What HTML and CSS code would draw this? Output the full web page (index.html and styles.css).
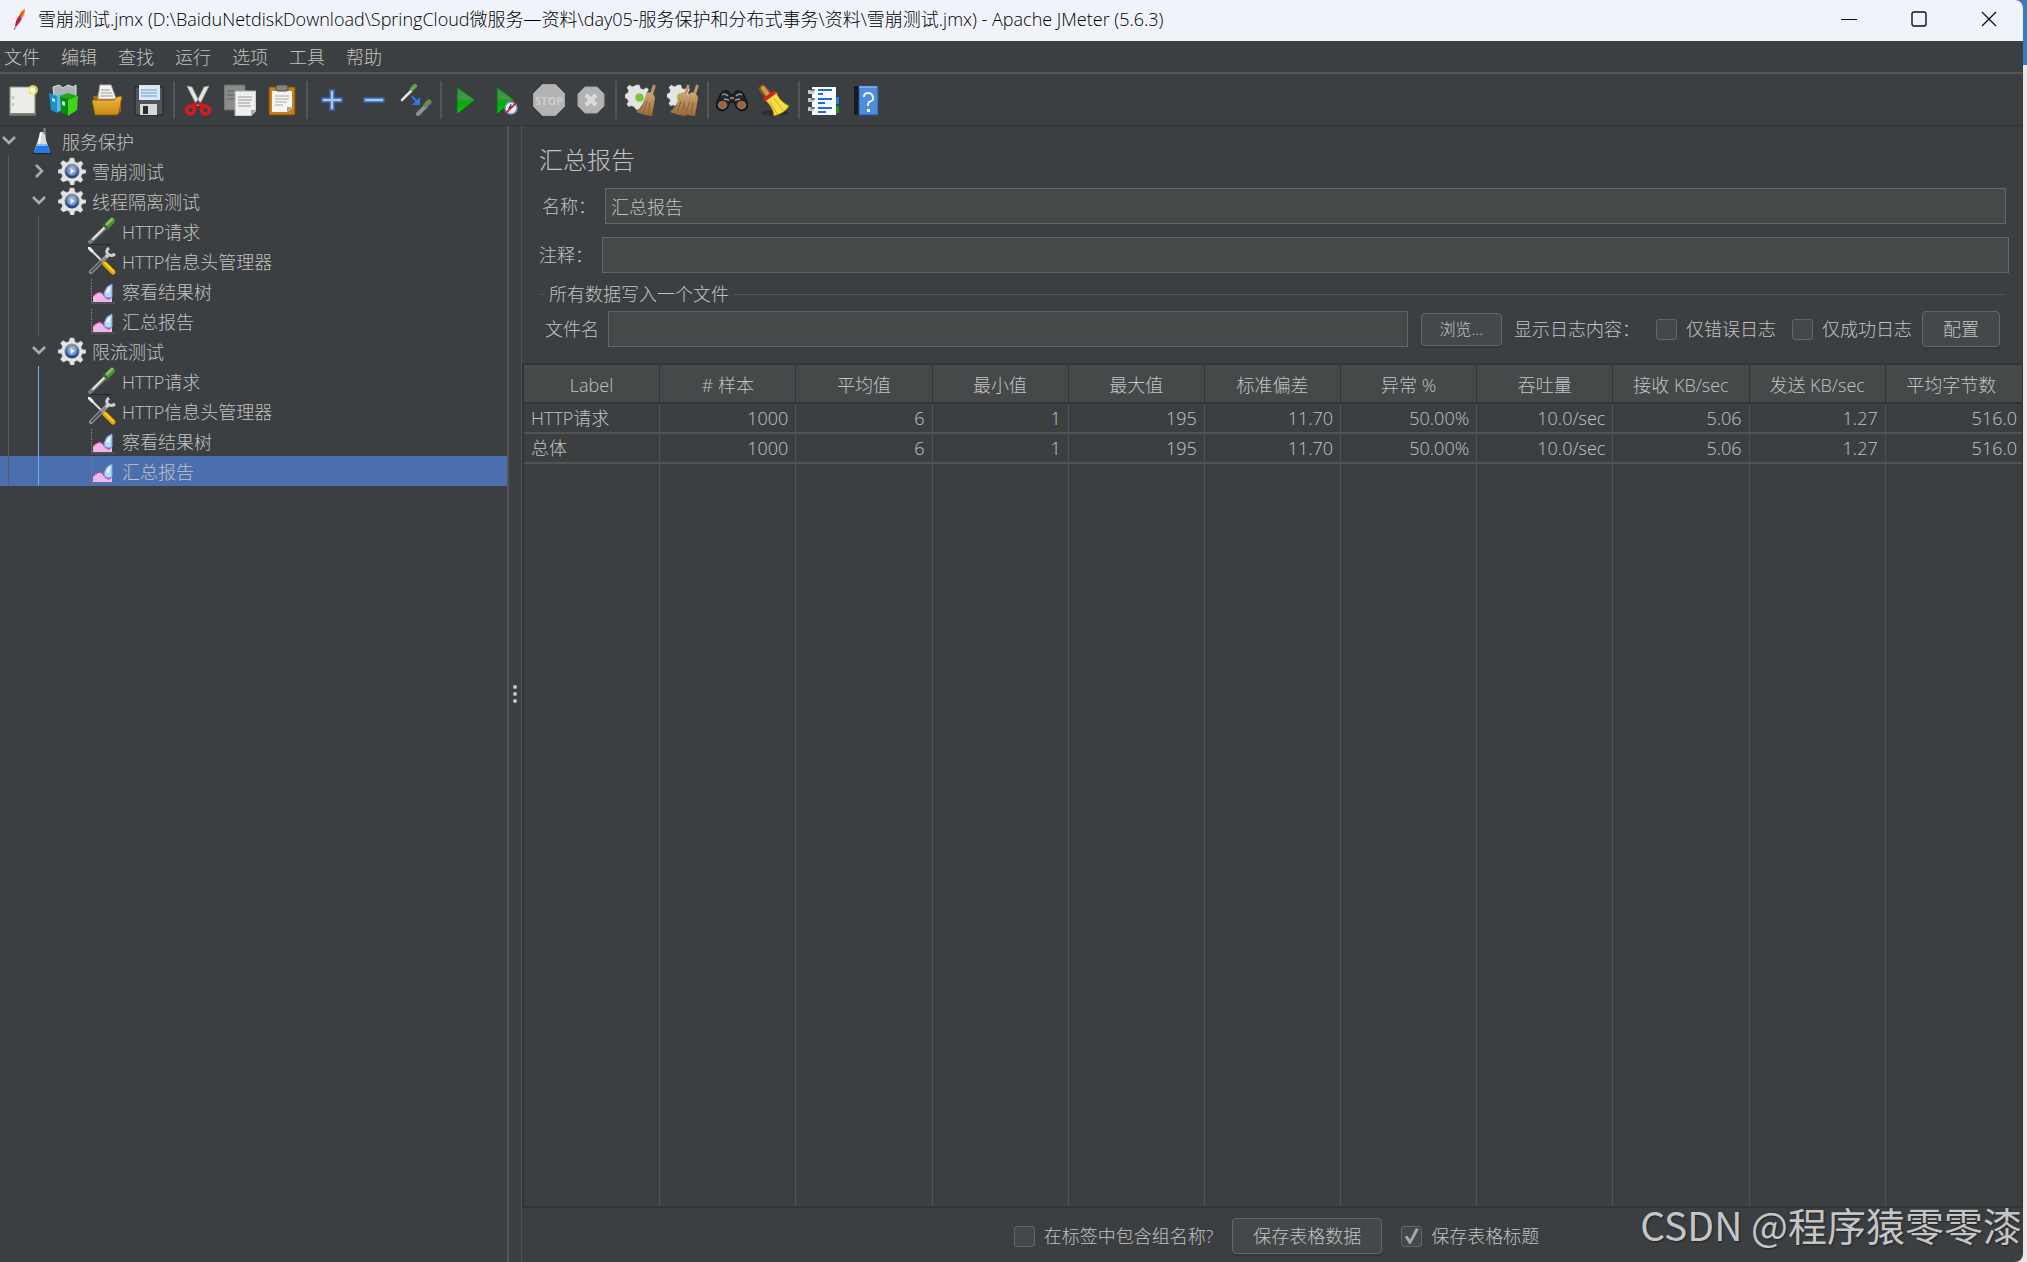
FILE: index.html
```html
<!DOCTYPE html>
<html lang="zh-CN">
<head>
<meta charset="utf-8">
<title>雪崩测试.jmx - Apache JMeter (5.6.3)</title>
<link rel="stylesheet" href="styles.css">
</head>
<body>
<svg class="defs" aria-hidden="true">
  <defs>
    <linearGradient id="g-blue" x1="0" y1="0" x2="0" y2="1"><stop offset="0" stop-color="#b4c6de"/><stop offset=".5" stop-color="#7b9bc9"/><stop offset="1" stop-color="#6fa0e6"/></linearGradient>
    <linearGradient id="g-ring" x1="0" y1="0" x2="0" y2="1"><stop offset="0" stop-color="#8293b0"/><stop offset="1" stop-color="#27457f"/></linearGradient>
    <linearGradient id="g-green" x1="0" y1="0" x2="0" y2="1"><stop offset="0" stop-color="#2f8f35"/><stop offset=".4" stop-color="#3f9a45"/><stop offset=".6" stop-color="#08a80a"/><stop offset="1" stop-color="#04d004"/></linearGradient>
    <linearGradient id="g-gold" x1="0" y1="0" x2="0" y2="1"><stop offset="0" stop-color="#f0b840"/><stop offset="1" stop-color="#c98912"/></linearGradient>
    <linearGradient id="g-broom" x1="0" y1="0" x2="0" y2="1"><stop offset="0" stop-color="#cfa873"/><stop offset="1" stop-color="#97693a"/></linearGradient>
    <symbol id="cog" viewBox="0 0 28 28">
      <path fill="#e4e4e2" stroke="#b4b4b0" stroke-width=".6" d="M12 1h4l1 4 2.500 1L23 4l2 2.500-2 3.500 1 2.500 4 .5v3l-4 1-1 2.500 2 3.500-2.500 2.500-3.500-2-2.500 1-.5 4h-3.500l-1-4-2.500-1L5 25l-2.500-2.500 2-3.500-1-2.500L0 16v-3l3.500-1 1-2.500-2-3.500L5 3.500l3.500 2 2.500-1z"/>
      <circle cx="14" cy="14" r="6" fill="url(#g-blue)" stroke="url(#g-ring)" stroke-width="3"/>
      <path fill="#e6effa" d="M12.500 11l4.500 3-4.500 3z"/>
    </symbol>
    <symbol id="flask" viewBox="0 0 28 28">
      <ellipse cx="14" cy="26" rx="10" ry="1.500" fill="#222426"/>
      <path fill="#d4dadd" d="M12 5h5l1 8 4 12q0 1-1 1H7q-1 0-1-1l4-12z"/>
      <path fill="#1f7be8" d="M9 17h10l3 8q0 1-1 1H7q-1 0-1-1z"/><path fill="#81b7fa" d="M9 17h10l.5 2h-11z"/>
      <path stroke="#818789" stroke-width="2" d="M16.500 1v6"/><path stroke="#fff" stroke-width="1.500" d="M13 6l-2 11"/>
    </symbol>
    <symbol id="dropper" viewBox="0 0 28 28">
      <path stroke="#26292b" stroke-width="1" d="M3 27.500h20"/>
      <path stroke="#777b7b" stroke-width="4" stroke-linecap="round" d="M2 25L17 11"/><path stroke="#e3e7e5" stroke-width="2" stroke-linecap="round" d="M5 22L17 10"/>
      <path stroke="#4d8b39" stroke-width="6" stroke-linecap="round" d="M19 9l5-5"/><path stroke="#83be61" stroke-width="3" stroke-linecap="round" d="M19 7l5-5"/><path stroke="#39692b" stroke-width="2" d="M15 7l6 6"/>
    </symbol>
    <symbol id="tools" viewBox="0 0 28 28">
      <path stroke="#e1e3e3" stroke-width="2" stroke-linecap="round" d="M2 2l14 14"/><path stroke="#f0f2f2" stroke-width="3" stroke-linecap="round" d="M1 1l3 3"/>
      <path stroke="#8c9190" stroke-width="4" stroke-linecap="round" d="M3 25L20 8"/><path stroke="#3b3e3e" stroke-width="1.500" d="M3 25l10-10"/>
      <path fill="none" stroke="#ccd0d0" stroke-width="3" d="M21 1q-4 3-1 6t7 0M18 10l3-3"/>
      <path stroke="#e3a900" stroke-width="5" stroke-linecap="round" d="M17 17l8 8"/><path stroke="#ffd92c" stroke-width="1.500" stroke-linecap="round" d="M17 16l8 8"/>
    </symbol>
    <symbol id="chart" viewBox="0 0 28 28">
      <path fill="none" stroke="#777b7e" d="M3.500 2v24H27" stroke-dasharray="2 1"/>
      <path fill="#efb5ee" d="M5 25v-6l4-3 3-1 3 2 3 4 3 1 3-2v5z"/><path fill="none" stroke="#bd3a71" stroke-width="1.300" stroke-dasharray="2 1" d="M5 19l4-3 3-1 3 2 3 4 3 1 3-2"/>
      <path fill="#b8d4fb" stroke="#6ea0e5" d="M16 16l3-6 5-3v13l-3 1-4-1z"/><path fill="#eef6ff" d="M18 15l2-4 3-2-2 7z"/>
    </symbol>
    <symbol id="chev-d" viewBox="0 0 18 18"><path fill="none" stroke="#adadad" stroke-width="2.500" d="M3 5l6 6 6-6"/></symbol>
    <symbol id="chev-r" viewBox="0 0 18 18"><path fill="none" stroke="#adadad" stroke-width="2.500" d="M6 3l6 6-6 6"/></symbol>
    <symbol id="gearbig" viewBox="0 0 32 32"><path fill="#e4e5e3" stroke="#b8bab8" stroke-width=".5" d="M12 1h4l1 4 3 1 4-2 2 2-2 4 1 3 3 1v4l-3 1-2 2 1 3-3 3-4-1-2 2h-3l-2-3-3-1-3 1-2-3 2-3-2-3-3-1v-3l4-2 1-3-2-3 3-3 3 2 3-1z"/><circle cx="16" cy="15" r="4.500" fill="#79c533" stroke="#adcc91"/></symbol>
    <symbol id="brush" viewBox="0 0 20 32"><path stroke="#b9966a" stroke-width="3" d="M18.500 1l-4 12"/><path fill="url(#g-broom)" d="M10 10l3-2 5 3 1 3-3 18-7-1-9-3q7-6 10-18z"/><path fill="none" stroke="#8a6238" d="M11 17l-4 12M14 18l-2 12M7 21l-4 6"/></symbol>
  </defs>
</svg>
<div class="window">
  <header class="titlebar">
    <svg class="feather" viewBox="0 0 20 28"><path stroke="#6b3276" stroke-width="1.500" stroke-dasharray="2 1" d="M3 27l5-10"/><path fill="#c91f46" d="M4 23q0-7 5-13l5-5-2 9q-3 7-8 9z"/><path fill="#f08322" d="M9 10q2-6 7-9 1 6-4 13z"/><path fill="none" stroke="#7f2a5b" d="M5 22q3-9 9-17"/></svg>
    <h1 class="caption">雪崩测试.jmx (D:\BaiduNetdiskDownload\SpringCloud微服务—资料\day05-服务保护和分布式事务\资料\雪崩测试.jmx) - Apache JMeter (5.6.3)</h1>
    <div class="winbtns">
      <button class="winbtn" aria-label="最小化"><svg viewBox="0 0 16 16"><path stroke="#111" stroke-width="1" d="M0 8.500h16"/></svg></button>
      <button class="winbtn" aria-label="最大化"><svg viewBox="0 0 16 16"><rect x="1" y="1" width="14" height="14" rx="2" fill="none" stroke="#111" stroke-width="1.400"/></svg></button>
      <button class="winbtn" aria-label="关闭"><svg viewBox="0 0 16 16"><path stroke="#111" stroke-width="1.300" d="M1 1l14 14M15 1L1 15"/></svg></button>
    </div>
  </header>
  <nav class="menubar">
    <button>文件</button><button>编辑</button><button>查找</button><button>运行</button><button>选项</button><button>工具</button><button>帮助</button>
  </nav>
  <div class="toolbar" role="toolbar">
    <button class="tool" aria-label="新建"><svg viewBox="0 0 32 32"><path fill="#ecece8" stroke="#8f8f86" stroke-width="1.200" d="M3 3h25v28H3z"/><path fill="#7d7e74" d="M3 29h26v2H3z"/><path stroke="#999" d="M6 12v3M6 19v3"/><circle cx="26" cy="6" r="5" fill="#f3e769" opacity=".8"/><circle cx="26" cy="6" r="2.500" fill="#fffde0"/></svg></button>
    <button class="tool" aria-label="模板"><svg viewBox="0 0 32 32"><path fill="#a8b4ba" stroke="#dbe3e6" d="M4 3l6-2 4 3 5-3 5 2 3-2v12H5z"/><path fill="#1d8fd0" d="M0 9l8 3 5-2v16l-5 3-6-3z"/><path fill="#59b9e8" d="M8 12l5-2v16l-5 2z"/><path fill="#1fa90e" d="M11 12l8-3 10 3-9 4z"/><path fill="#0c8a0a" d="M11 12l8 4v16l-7-4z"/><path fill="#3bd51a" d="M19 16l10-4-1 14-9 6z"/><path fill="#b8ecf5" d="M3 14l3 1v3l-3-1zM13 17l3 1v4l-3-1z"/></svg></button>
    <button class="tool" aria-label="打开"><svg viewBox="0 0 32 32"><path fill="#a36b0c" d="M2 12h4l1-3h16l2 4 5-1v16H5z"/><path fill="#f4f4f2" stroke="#b4b4b4" d="M9 1h11l5 14H7z"/><path stroke="#999" d="M10 6h9M10 9h11M9 12h13"/><path fill="url(#g-gold)" stroke="#8d5b08" stroke-width=".8" d="M1 16h22l3-3 5-1-3 17q-1 2-3 2H4z"/></svg></button>
    <button class="tool" aria-label="保存"><svg viewBox="0 0 32 32"><path fill="#515559" stroke="#1d1f21" d="M2 3h28v28H3l-1-2z"/><path fill="#d9e8f6" d="M6 1h21v15H6z"/><path stroke="#6f9cc9" d="M8 6h16M8 9h16M8 12h16"/><path fill="#d7d9d7" d="M7 20h17v11H7z"/><path fill="#292c2e" d="M10 22h5v8h-5z"/></svg></button>
    <span class="tsep"></span>
    <button class="tool" aria-label="剪切"><svg viewBox="0 0 32 32"><path fill="#e4e6e4" stroke="#9a9d9a" stroke-width=".7" d="M5 2l5 1 8 16-3 3zM27 2l-5 1-8 16 3 3z"/><g fill="none" stroke="#d81a1a" stroke-width="3.500"><circle cx="8.500" cy="26" r="4"/><circle cx="23.500" cy="26" r="4"/><path d="M11 22l4-3M21 22l-4-3"/></g></svg></button>
    <button class="tool" aria-label="复制"><svg viewBox="0 0 32 32"><path fill="#8b8d8d" stroke="#666" d="M0 1h21v25H0z"/><path stroke="#606363" d="M3 7h15M3 11h15M3 15h15"/><path fill="#efefed" stroke="#aaa" d="M11 7h21v20l-5 5H11z"/><path fill="#a9aaa5" d="M32 26h-5v6z"/><path stroke="#999" d="M14 13h14M14 16h14M14 19h12M14 22h13"/></svg></button>
    <button class="tool" aria-label="粘贴"><svg viewBox="0 0 32 32"><rect x="3" y="3" width="26" height="28" rx="1" fill="#c1821f" stroke="#7d4e0c"/><path fill="#f4f4f1" d="M6 7h20v17l-5 4H6z"/><path fill="#a0a29d" d="M26 23l-5 5v-5z"/><rect x="10" y="1" width="12" height="6" rx="2" fill="#82857c" stroke="#4d504a"/><path stroke="#aaa" d="M9 12h14M9 15h14M9 18h12M9 21h8"/></svg></button>
    <span class="tsep"></span>
    <button class="tool" aria-label="展开"><svg viewBox="0 0 32 32"><path fill="#a3c6ee" stroke="#3767ae" stroke-width="1.500" d="M14 6h4v8h8v4h-8v8h-4v-8H6v-4h8z"/></svg></button>
    <button class="tool" aria-label="折叠"><svg viewBox="0 0 32 32"><path fill="#a3c6ee" stroke="#3767ae" stroke-width="1.500" d="M6 14h20v4H6z"/></svg></button>
    <button class="tool" aria-label="切换"><svg viewBox="0 0 32 32"><path stroke="#e4e8e5" stroke-width="2.500" stroke-linecap="round" d="M2 16l9-9"/><path stroke="#63a64c" stroke-width="4" stroke-linecap="round" d="M12 5l3-3"/><path stroke="#8d918e" stroke-width="4" stroke-linecap="round" d="M18 30l8-8"/><path stroke="#6a8a60" stroke-width="5" stroke-linecap="round" d="M26 21l3-3"/><path stroke="#2d79e2" stroke-width="2" d="M12 12l5 6"/><path fill="#2d79e2" d="M20 13v8h-8z"/></svg></button>
    <span class="tsep"></span>
    <button class="tool" aria-label="启动"><svg viewBox="0 0 32 32"><path fill="url(#g-green)" stroke="#116315" stroke-width=".7" d="M8 3l18 13L8 30z"/></svg></button>
    <button class="tool" aria-label="不停顿启动"><svg viewBox="0 0 32 32"><path fill="url(#g-green)" stroke="#116315" stroke-width=".7" d="M6 3l17 13L6 30z"/><circle cx="20" cy="24" r="6" fill="#e4edf6" stroke="#6d99cc" stroke-width="1.500"/><path stroke="#4d79b0" d="M20 20v4l-3 1"/><path stroke="#d22" stroke-width="1.800" d="M15 29l10-10"/></svg></button>
    <button class="tool" aria-label="停止"><svg viewBox="0 0 32 32"><path fill="#b3b3b3" stroke="#a0a0a0" d="M10 0h12l10 10v12L22 32H10L0 22V10z"/><text x="16" y="21" text-anchor="middle" class="stop-text">STOP</text></svg></button>
    <button class="tool" aria-label="关闭线程"><svg viewBox="0 0 32 32"><path fill="#b3b3b3" stroke="#a5a5a5" d="M10 3h12l7 7v12l-7 7H10l-7-7V10z"/><path stroke="#dcdcdc" stroke-width="4" d="M11 11l10 10M21 11L11 21"/></svg></button>
    <span class="tsep"></span>
    <button class="tool" aria-label="清除"><svg viewBox="0 0 32 32"><use href="#gearbig" x="0" y="0" width="29" height="29"/><use href="#brush" x="11" y="0" width="20" height="32"/></svg></button>
    <button class="tool" aria-label="清除全部"><svg viewBox="0 0 32 32"><use href="#gearbig" x="0" y="0" width="28" height="28"/><use href="#brush" x="3" y="0" width="20" height="32"/><use href="#brush" x="12" y="0" width="20" height="32"/></svg></button>
    <span class="tsep wide"></span>
    <button class="tool" aria-label="搜索"><svg viewBox="0 0 32 32"><path fill="#242526" stroke="#0c0c0c" d="M4 11q2-5 8-4l3 4h2l3-4q6-1 8 4l4 9q0 6-6 7-6-1-7-7l-2-2h-2l-2 2q-1 6-7 7-6-1-6-7z"/><path stroke="#9a9ea2" stroke-width="1.500" d="M6 11q3-2 6 1M20 12q3-3 6-1M14 14h4M8 15l5 1M19 16l5-1"/><ellipse cx="6.500" cy="21" rx="4" ry="3.500" fill="#a65f2a" stroke="#8a8d90"/><ellipse cx="25.500" cy="21" rx="4" ry="3.500" fill="#a65f2a" stroke="#8a8d90"/></svg></button>
    <button class="tool" aria-label="重置搜索"><svg viewBox="0 0 32 32"><ellipse cx="17" cy="29" rx="14" ry="3" fill="#2d3032"/><path stroke="#8a571d" stroke-width="8" stroke-linecap="round" d="M5 5l5 6"/><path stroke="#d09a50" stroke-width="4" stroke-linecap="round" d="M5 4l5 7"/><path fill="#f3de45" stroke="#a88310" stroke-width=".8" d="M6 15l12-7q3 9 13 14-4 7-15 10-1-10-10-17z"/><path stroke="#cfae20" d="M12 17l7 13M16 14l9 12"/><path stroke="#d62222" stroke-width="4" d="M6 16l11-8"/></svg></button>
    <span class="tsep"></span>
    <button class="tool" aria-label="函数助手"><svg viewBox="0 0 32 32"><path fill="#247be0" d="M26 13h5v7h-5z"/><path fill="#1d8e28" d="M26 22h5v7h-5z"/><path fill="#fafafa" d="M4 3h24v28H4z"/><path stroke="#c8c8c8" stroke-width="4" d="M0 8h6M0 16h6M0 25h6"/><path stroke="#222" d="M3 6h4M3 15h4M3 24h4"/><path stroke="#1e69e4" stroke-width="2" d="M10 6h14M10 10h5M10 15h14M10 19h7M10 24h14M10 28h8"/></svg></button>
    <button class="tool" aria-label="帮助"><svg viewBox="0 0 32 32"><path fill="#151a20" d="M4 2h6v29H4z"/><path fill="#4e8ddb" stroke="#275694" d="M9 2h19v29H9z"/><path stroke="#a8c9f2" d="M9 3h18"/><path fill="none" stroke="#e8f2fe" stroke-width="2" d="M14 13q0-4 4-4t5 4-4 5q-1 1-1 4"/><path fill="#e8f2fe" d="M17 25h3v3h-3z"/></svg></button>
  </div>
  <div class="main">
    <aside class="tree" role="tree">
      <div class="row" role="treeitem"><svg class="chev"><use href="#chev-d"/></svg><svg class="ico"><use href="#flask"/></svg><span>服务保护</span></div>
      <div class="row" role="treeitem"><i class="guide"></i><svg class="chev"><use href="#chev-r"/></svg><svg class="ico"><use href="#cog"/></svg><span>雪崩测试</span></div>
      <div class="row" role="treeitem"><i class="guide"></i><svg class="chev"><use href="#chev-d"/></svg><svg class="ico"><use href="#cog"/></svg><span>线程隔离测试</span></div>
      <div class="row" role="treeitem"><i class="guide"></i><i class="guide"></i><i class="chev"></i><svg class="ico"><use href="#dropper"/></svg><span>HTTP请求</span></div>
      <div class="row" role="treeitem"><i class="guide"></i><i class="guide"></i><i class="chev"></i><svg class="ico"><use href="#tools"/></svg><span>HTTP信息头管理器</span></div>
      <div class="row" role="treeitem"><i class="guide"></i><i class="guide"></i><i class="chev"></i><svg class="ico"><use href="#chart"/></svg><span>察看结果树</span></div>
      <div class="row" role="treeitem"><i class="guide"></i><i class="guide"></i><i class="chev"></i><svg class="ico"><use href="#chart"/></svg><span>汇总报告</span></div>
      <div class="row" role="treeitem"><i class="guide"></i><svg class="chev"><use href="#chev-d"/></svg><svg class="ico"><use href="#cog"/></svg><span>限流测试</span></div>
      <div class="row" role="treeitem"><i class="guide"></i><i class="guide active"></i><i class="chev"></i><svg class="ico"><use href="#dropper"/></svg><span>HTTP请求</span></div>
      <div class="row" role="treeitem"><i class="guide"></i><i class="guide active"></i><i class="chev"></i><svg class="ico"><use href="#tools"/></svg><span>HTTP信息头管理器</span></div>
      <div class="row" role="treeitem"><i class="guide"></i><i class="guide active"></i><i class="chev"></i><svg class="ico"><use href="#chart"/></svg><span>察看结果树</span></div>
      <div class="row selected" role="treeitem" aria-selected="true"><i class="guide"></i><i class="guide active"></i><i class="chev"></i><svg class="ico"><use href="#chart"/></svg><span>汇总报告</span></div>
    </aside>
    <div class="splitter"><svg viewBox="0 0 6 20"><g fill="#c4c4c4"><circle cx="3" cy="3" r="2"/><circle cx="3" cy="10" r="2"/><circle cx="3" cy="17" r="2"/></g></svg></div>
    <main class="panel">
      <div class="form">
        <h2>汇总报告</h2>
        <div class="field name"><label for="name">名称：</label><input id="name" type="text" value="汇总报告"></div>
        <div class="field note"><label for="note">注释：</label><input id="note" type="text"></div>
        <section class="group">
          <div class="legend">所有数据写入一个文件</div>
          <div class="filerow">
            <label for="file">文件名</label><input id="file" type="text">
            <button class="btn browse">浏览...</button>
            <span class="loglabel">显示日志内容：</span>
            <label class="check"><input type="checkbox">仅错误日志</label>
            <label class="check"><input type="checkbox">仅成功日志</label>
            <button class="btn">配置</button>
          </div>
        </section>
      </div>
      <div class="tablewrap">
        <table>
          <thead><tr><th>Label</th><th># 样本</th><th>平均值</th><th>最小值</th><th>最大值</th><th>标准偏差</th><th>异常 %</th><th>吞吐量</th><th>接收 KB/sec</th><th>发送 KB/sec</th><th>平均字节数</th></tr></thead>
          <tbody>
            <tr><td>HTTP请求</td><td>1000</td><td>6</td><td>1</td><td>195</td><td>11.70</td><td>50.00%</td><td>10.0/sec</td><td>5.06</td><td>1.27</td><td>516.0</td></tr>
            <tr><td>总体</td><td>1000</td><td>6</td><td>1</td><td>195</td><td>11.70</td><td>50.00%</td><td>10.0/sec</td><td>5.06</td><td>1.27</td><td>516.0</td></tr>
            <tr class="rest" aria-hidden="true"><td></td><td></td><td></td><td></td><td></td><td></td><td></td><td></td><td></td><td></td><td></td></tr>
          </tbody>
        </table>
      </div>
      <footer class="actions">
        <label class="check"><input type="checkbox">在标签中包含组名称?</label>
        <button class="btn save">保存表格数据</button>
        <label class="check"><input type="checkbox" checked>保存表格标题</label>
      </footer>
    </main>
  </div>
  <div class="watermark">CSDN @程序猿零零漆</div>
</div>
</body>
</html>
```
FILE: styles.css
```css
:root {
  --bg: #3c3f41;
  --field: #45494a;
  --line: #515456;
  --dark: #323537;
  --border: #646667;
  --text: #c2c2c2;
}
* { box-sizing: border-box; }
body {
  margin: 0;
  background: linear-gradient(#3a7ab8 65px, #e8e8e8 65px);
  font-family: "Open Sans", "Noto Sans CJK SC", sans-serif;
  font-weight: 300;
  font-size: 18px;
  line-height: 24px;
  color: var(--text);
}
button, input { font: inherit; color: inherit; margin: 0; }
button { padding: 0; border: 0; background: none; }
svg { display: block; }
.defs { position: absolute; width: 0; height: 0; }

.window {
  position: relative;
  display: flex;
  flex-direction: column;
  min-height: 100vh;
  margin-right: 4px;
  background: var(--bg);
  border-radius: 0 8px 8px 0;
  overflow: hidden;
}
.titlebar {
  display: flex;
  align-items: center;
  height: 41px;
  padding: 0 12px 4px;
  background: #f0f3fa;
  color: #000;
}
.feather { width: 16px; height: 24px; }
.caption { flex: 1; margin: 0 0 0 10px; font-size: 18px; font-weight: 300; white-space: nowrap; }
.winbtns { display: flex; gap: 54px; padding-right: 14px; }
.winbtn svg { width: 16px; height: 16px; }

.menubar {
  display: flex;
  gap: 21px;
  height: 33px;
  padding: 0 4px;
  border-bottom: 2px solid #555555;
}
.toolbar {
  display: flex;
  align-items: center;
  height: 52px;
  padding: 0 2px;
  border-bottom: 1px solid var(--dark);
}
.tool { display: grid; place-items: center; width: 42px; height: 42px; }
.tool svg { width: 32px; height: 32px; }
.tsep { width: 2px; height: 38px; margin: 0 3px; background: #555555; }
.tsep:nth-of-type(odd) { margin-right: 2px; }

.stop-text { font-size: 11px; font-weight: 700; fill: #cecece; }

.main { flex: 1; display: flex; }
.tree { flex: 0 0 509px; border-right: 2px solid #555555; }
.row { display: flex; align-items: center; height: 30px; white-space: nowrap; }
.row > span { padding-top: 2px; }
.guide { align-self: stretch; width: 22px; margin-left: 8px; border-left: 1px solid #5a5c5e; }
.guide.active { border-color: #6fb1f0; }
.chev { width: 18px; height: 18px; }
.ico { width: 28px; height: 28px; margin: 0 6px 0 10px; }
.selected { background: #4b6eaf; }
.splitter { flex: 0 0 12px; display: grid; place-items: center; }
.splitter svg { width: 6px; height: 20px; }

.panel { flex: 1; min-width: 0; display: flex; flex-direction: column; border-left: 1px solid var(--line); }
.form { padding: 18px 14px 16px 17px; }
h2 { margin: 0 0 12px; font-size: 24px; line-height: 32px; font-weight: 300; }
.field { display: flex; align-items: center; }
.field label { flex: none; width: 63px; }
.name { margin: 0 3px 13px 0; padding-left: 3px; }
.note { margin-bottom: 9px; }
input[type="text"] {
  flex: 1;
  min-width: 0;
  height: 36px;
  padding: 0 5px;
  border: 1px solid var(--border);
  background: var(--field);
  font-weight: 300;
}
.group { padding-right: 3px; }
.legend { display: flex; align-items: center; gap: 4px; }
.legend::before, .legend::after { content: ""; width: 6px; border-top: 1px solid var(--line); }
.legend::after { flex: 1; }
.filerow { display: flex; align-items: center; margin: 5px 6px 0; }
.filerow > label:first-child { width: 63px; }
.btn {
  height: 36px;
  padding: 0 20px;
  border: 1px solid var(--border);
  border-radius: 4px;
  background: #43494a;
  box-shadow: 0 2px 0 #35383a;
  white-space: nowrap;
}
.browse { height: 33px; margin: 0 12px 0 13px; padding: 0 18px; font-size: 16px; }
.loglabel { margin-right: 16px; }
.check { display: flex; align-items: center; gap: 9px; white-space: nowrap; }
.filerow .check { margin-right: 10px; }
.check + .check { margin-left: 6px; }
input[type="checkbox"] {
  appearance: none;
  flex: none;
  display: grid;
  place-items: center;
  width: 21px;
  height: 21px;
  border: 1px solid var(--border);
  border-radius: 3px;
  background: #43494a;
}
input[type="checkbox"]:checked::before {
  content: "";
  width: 14px;
  height: 16px;
  background: #a8a8a8;
  clip-path: polygon(0 55%, 18% 48%, 38% 72%, 80% 0, 100% 8%, 42% 100%, 32% 100%);
}

.tablewrap { flex: 1; display: flex; border: solid var(--dark); border-width: 2px 1px 2px 2px; }
table { flex: 1; table-layout: fixed; width: 100%; border-spacing: 0; }
th, td { padding: 0 7px; border-right: 1px solid var(--line); white-space: nowrap; }
th { height: 39px; padding: 2px 0 0; border-right-color: var(--dark); border-bottom: 2px solid var(--dark); background: var(--field); font-weight: 300; }
td { height: 30px; border-bottom: 2px solid var(--line); text-align: right; }
td:first-child { text-align: left; }
th:last-child, td:last-child { border-right: 0; padding-right: 5px; }
.rest td { height: auto; border-bottom: 0; }
.actions { display: flex; align-items: center; justify-content: center; gap: 19px; height: 54px; padding: 7px 0 5px 8px; }

.watermark {
  position: absolute;
  right: 1px;
  bottom: 9px;
  font: 400 39px/58px "Noto Sans CJK SC", sans-serif;
  color: #c4c5c6;
  text-shadow: 1px 1px 2px #222;
}
```
